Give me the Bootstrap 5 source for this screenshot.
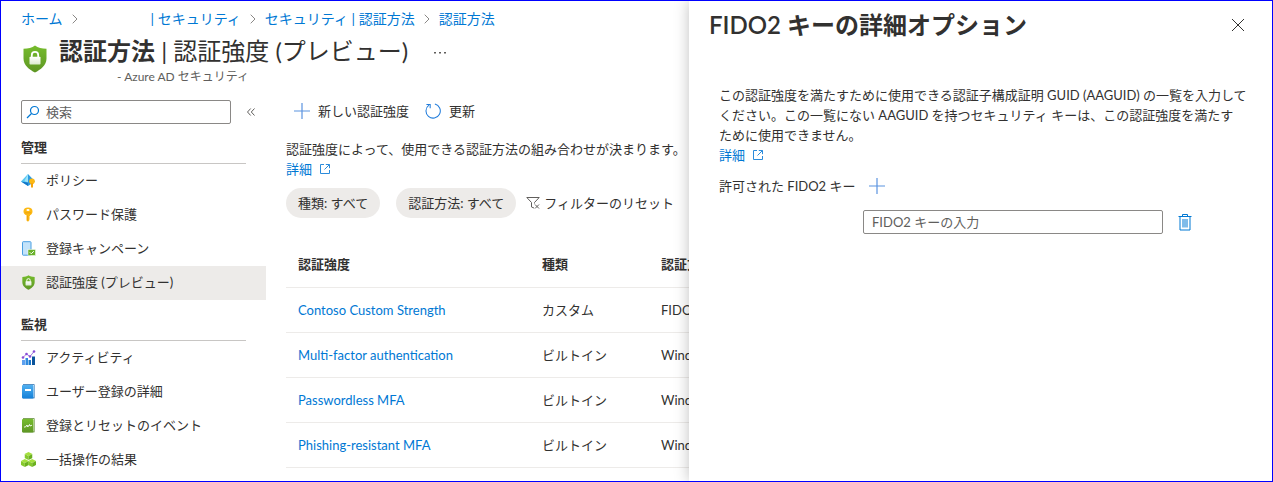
<!DOCTYPE html>
<html lang="ja">
<head>
<meta charset="utf-8">
<meta name="viewport" content="width=device-width, initial-scale=1">
<title>認証方法 | 認証強度 (プレビュー)</title>
<link href="https://cdn.jsdelivr.net/npm/bootstrap@5.3.0/dist/css/bootstrap.min.css" rel="stylesheet">
<style>
:root { --az-blue: #0078d4; --az-text: #323130; --az-muted: #605e5c; --az-line: #edebe9; }
body { font-family: Lato, "Noto Sans CJK JP", sans-serif; font-size: 13px; line-height: 20px; color: var(--az-text); background: #fff; }
a { color: var(--az-blue); text-decoration: none; }
svg { display: block; flex: none; }
.shell { min-height: 100vh; border: 1px solid #00f; }
.blade { flex: 688 1 0; min-width: 0; }
.panel { flex: 583 1 0; min-width: 0; background: #fff; box-shadow: 0 0 14px rgba(0,0,0,.25); clip-path: inset(0 0 0 -20px); }
.panel-in { padding: 8px 19px 8px 20px; }
.crumbs { --bs-breadcrumb-item-padding-x: 0; font-size: 14px; padding: 8px 0 0 20px; gap: 9px; height: 28px; }
.tenant { padding-left: 64px; }
.head { padding: 0 20px; height: 57px; }
.head h1 { font-size: 24px; line-height: 36px; font-weight: 400; margin: 4px 0 0; }
.head h1 b { font-weight: 600; }
.head p { font-size: 12px; line-height: 16px; color: var(--az-muted); padding-left: 58px; margin: 0; }
.head-text { margin-left: 10px; }
.side { width: 265px; flex: none; padding-top: 14px; }
.finder { width: 210px; }
.box { height: 24px; border: 1px solid #8a8886; border-radius: 2px; font-size: 13px; line-height: 20px; padding: 1px 8px; color: var(--az-text); }
.box::placeholder { color: var(--az-muted); opacity: 1; }
.finder .box { padding-left: 24px; }
.finder svg { position: absolute; left: 5px; top: 5px; }
.side h2 { font-size: 13px; line-height: 20px; font-weight: 600; margin: 0 20px; padding: 14px 0 6px; border-bottom: 1px solid #c8c6c4; }
.side h2.first { padding-top: 13px; }
.menu a { height: 34px; padding: 0 0 2px 20px; gap: 10px; color: var(--az-text); }
.menu a.active { background: var(--az-line); }
.content { min-width: 0; overflow: hidden; padding: 15px 0 0 20px; }
.tool { border: 0; background: none; padding: 0; color: var(--az-text); }
.pill { border: 0; border-radius: 15px; height: 30px; padding: 0 12px; background: var(--az-line); color: var(--az-text); }
.bar { margin-bottom: 18px; }
.filters { margin-top: 9px; }
.reset { margin-left: 10px; }
.grid { width: 600px; table-layout: fixed; margin: 24px 0 0; --bs-table-color: var(--az-text); }
.grid th, .grid td { height: 45px; padding: 0 12px; vertical-align: middle; border-bottom: 1px solid var(--az-line); white-space: nowrap; }
.grid th { font-weight: 600; }
.grid .c1 { width: 244px; } .grid .c2 { width: 119px; }
.panel h2 { font-size: 24px; line-height: 32px; font-weight: 600; margin: 0; }
.pbody { padding: 44px 0 0 10px; }
.allowed { gap: 14px; margin-top: 11px; }
.keyrow { padding-left: 144px; gap: 14px; margin-top: 14px; }
.keyrow .box { width: 300px; }
</style>
</head>
<body>
<svg width="0" height="0" class="position-absolute" aria-hidden="true">
  <defs>
    <linearGradient id="gg" x1="0" y1="0" x2="0" y2="1"><stop offset="0" stop-color="#76bc2d"/><stop offset="1" stop-color="#5e9624"/></linearGradient>
    <linearGradient id="gb" x1="0" y1="0" x2="0" y2="1"><stop offset="0" stop-color="#50b0f0"/><stop offset="1" stop-color="#1480d8"/></linearGradient>
    <linearGradient id="gw" x1="0" y1="0" x2="0" y2="1"><stop offset="0" stop-color="#fff"/><stop offset="1" stop-color="#dcebd0"/></linearGradient>
    <symbol id="shield" viewBox="0 0 24 28">
      <path fill="url(#gg)" d="M12 .5c3 2.400 6.800 3 11.500 3.200v9.800c0 7-6 11.200-11.500 14C6.500 24.700.5 20.500.5 13.500V3.700C5.200 3.500 9 2.900 12 .5z"/>
      <path fill="none" stroke="#fff" stroke-width="1.800" d="M8.800 12.500V10a3.200 3.200 0 0 1 6.400 0v2.500"/>
      <rect x="6.500" y="11.800" width="11" height="7.700" rx=".8" fill="url(#gw)"/>
    </symbol>
    <symbol id="chev" viewBox="0 0 6 10"><path d="M.7.7 5 5 .7 9.300" fill="none" stroke="#8a8886"/></symbol>
    <symbol id="plus" viewBox="0 0 16 16"><path d="M8 0v16M0 8h16" stroke="#5b93e0" stroke-width="1.200"/></symbol>
    <symbol id="ext" viewBox="0 0 10 10"><path d="M4 .5H.5v9h9V6M5.800.5h3.700v3.700M9.500.5 4.500 5.500" fill="none" stroke="#2b8bdb"/></symbol>
    <symbol id="cube" viewBox="0 0 8 8"><path fill="#a4e03c" d="M4 0 8 2 4 4 0 2z"/><path fill="#86c92c" d="M0 2l4 2v4L0 6z"/><path fill="#6bb01e" d="M8 2 4 4v4l4-2z"/></symbol>
  </defs>
</svg>

<div class="shell d-flex">
  <div class="blade d-flex flex-column">
    <nav aria-label="階層リンク">
      <ol class="breadcrumb crumbs d-flex flex-nowrap align-items-center mb-0 text-nowrap">
        <li><a href="#">ホーム</a></li>
        <li><svg width="6" height="10"><use href="#chev"/></svg></li>
        <li class="tenant"><a href="#">| セキュリティ</a></li>
        <li><svg width="6" height="10"><use href="#chev"/></svg></li>
        <li><a href="#">セキュリティ | 認証方法</a></li>
        <li><svg width="6" height="10"><use href="#chev"/></svg></li>
        <li><a href="#">認証方法</a></li>
      </ol>
    </nav>
    <header class="head d-flex">
      <svg class="mt-3" width="28" height="28"><use href="#shield"/></svg>
      <div class="head-text text-nowrap">
        <h1><b>認証方法</b> | 認証強度 (プレビュー)</h1>
        <p>- Azure AD セキュリティ</p>
      </div>
      <button class="tool ms-4 align-self-start mt-3" type="button" aria-label="その他"><svg width="14" height="14" viewBox="0 0 14 14" fill="#605e5c"><path d="M2 7h2v1.500H2zM7 7h2v1.500H7zM12 7h2v1.500h-2z"/></svg></button>
    </header>

    <div class="d-flex flex-grow-1">
      <aside class="side">
        <div class="d-flex align-items-center ps-3 ms-1 gap-3">
          <div class="finder position-relative">
            <svg width="14" height="14" viewBox="0 0 14 14" fill="none" stroke="#0078d4" stroke-width="1.200"><circle cx="8.500" cy="5.500" r="4"/><path d="M5.500 8.500 1 13"/></svg>
            <input class="form-control box" type="search" placeholder="検索" aria-label="検索">
          </div>
          <button class="tool" type="button" aria-label="メニューを折りたたむ"><svg width="8" height="8" viewBox="0 0 8 8" fill="none" stroke="#605e5c"><path d="M3.700.5.5 4l3.200 3.500M7.500.5 4.300 4l3.200 3.500"/></svg></button>
        </div>
        <h2 class="first">管理</h2>
        <nav class="menu" aria-label="管理">
          <a class="d-flex align-items-center" href="#">
            <svg width="15" height="15" viewBox="0 0 15 15"><path fill="#5ac8f2" d="M7 1v12L0 8.500z"/><path fill="#2f9be0" d="M7 1l7 7.500L7 13z"/><path fill="#9be3fa" d="M7 1 3.500 8 7 9.500z"/><path fill="#1577c8" d="M0 8.500 7 9.500V13z"/><circle cx="11" cy="8.300" r="2.800" fill="#fdb913"/><path fill="#f5a30c" d="M10 10h2v4l-1 1-1-1z"/></svg>ポリシー</a>
          <a class="d-flex align-items-center" href="#">
            <svg width="15" height="15" viewBox="0 0 15 15"><path fill="#fdb913" d="M7 .5C10 .5 11.500 2 11.500 4.500 11.500 6.500 10.500 7.500 9 8.300V9l-1 1 1 1-1 1 .7.800L7 14.700 5.500 13.500V8.300C3.500 7.500 2.500 6.500 2.500 4.500 2.500 2 4 .5 7 .5z"/><ellipse cx="7" cy="3" rx="1.600" ry="1" fill="#fff"/><path fill="#e89a0c" d="M4 5.500h6v.8H4zM6.300 8.500h.8v5h-.8z"/></svg>パスワード保護</a>
          <a class="d-flex align-items-center" href="#">
            <svg width="15" height="15" viewBox="0 0 15 15"><rect x="1.500" y=".7" width="8.500" height="13.500" rx=".7" fill="#c3e3fa" stroke="#4a9fe2"/><rect x="7" y="8.500" width="7.500" height="6" fill="#69b12a" stroke="#fff" stroke-width=".5"/><path d="m8.800 11.300 1.500 1.500 2.500-2.600" fill="none" stroke="#fff"/></svg>登録キャンペーン</a>
          <a class="d-flex align-items-center active" href="#" aria-current="page">
            <svg width="15" height="15"><use href="#shield"/></svg>認証強度 (プレビュー)</a>
        </nav>
        <h2>監視</h2>
        <nav class="menu" aria-label="監視">
          <a class="d-flex align-items-center" href="#">
            <svg width="15" height="15" viewBox="0 0 15 15"><path fill="#5ea0ef" d="M1 10h3v5H1z"/><path fill="#2f8be0" d="M4.500 8h2.500v7H4.500z"/><path fill="#1a78cc" d="M7.500 10H10v5H7.500z"/><path fill="#0a539b" d="M11 6.500h3V15h-3z"/><path d="M2 7.500 5.500 4 9 6.500 13 1.500" fill="none" stroke="#a479e0"/><g fill="#8a4fd6"><circle cx="2" cy="7.500" r="1.300"/><circle cx="5.500" cy="4" r="1.300"/><circle cx="9" cy="6.500" r="1.300"/><circle cx="13" cy="1.500" r="1.300"/></g></svg>アクティビティ</a>
          <a class="d-flex align-items-center" href="#">
            <svg width="15" height="15" viewBox="0 0 15 15"><path fill="#0f5fa8" d="M2 .3h11.500v14H2z"/><path fill="#e8f2fb" d="M3 1h10v12.500H3z"/><rect x="1" y="1" width="11.500" height="13.500" rx="1" fill="url(#gb)"/><path fill="#fff" d="M4 5h6v2H4z"/></svg>ユーザー登録の詳細</a>
          <a class="d-flex align-items-center" href="#">
            <svg width="15" height="15" viewBox="0 0 15 15"><path fill="#4a7d18" d="M2 .3h11.500v14H2z"/><path fill="#eef6e6" d="M3 1h10v12.500H3z"/><rect x="1" y="1" width="11.500" height="13.500" rx="1" fill="url(#gg)"/><path d="M3 9h1.500l1.500-2 .8 2L8.500 6.500 9 8l2-.8" fill="none" stroke="#fff" stroke-width=".9"/></svg>登録とリセットのイベント</a>
          <a class="d-flex align-items-center" href="#">
            <svg width="15" height="15" viewBox="0 0 15 15"><use href="#cube" x="3.500" y="0" width="8" height="8"/><use href="#cube" x="-.2" y="7" width="8" height="8"/><use href="#cube" x="7.200" y="7" width="8" height="8"/></svg>一括操作の結果</a>
        </nav>
      </aside>

      <main class="content flex-grow-1 text-nowrap">
        <div class="bar d-flex gap-3 ps-2 align-items-center">
          <button class="tool d-flex align-items-center gap-2" type="button"><svg width="16" height="16"><use href="#plus"/></svg>新しい認証強度</button>
          <button class="tool d-flex align-items-center gap-2" type="button"><svg width="16" height="16" viewBox="0 0 17 17" fill="none" stroke="#1f7bdb" stroke-width="1.100"><path d="M10.500 1.100A7.600 7.600 0 1 1 4.200 2.300M1.500 1.500h4v4"/></svg>更新</button>
        </div>
        <p class="mb-0">認証強度によって、使用できる認証方法の組み合わせが決まります。</p>
        <a class="d-inline-flex align-items-center gap-2" href="#">詳細<svg width="10" height="10"><use href="#ext"/></svg></a>
        <div class="filters d-flex align-items-center">
          <button class="pill" type="button">種類: すべて</button>
          <button class="pill ms-3" type="button">認証方法: すべて</button>
          <button class="tool reset d-flex align-items-center gap-1" type="button"><svg width="14" height="14" viewBox="0 0 14 14" fill="none" stroke="#605e5c"><path d="M8 12 5.500 11V6.500L.8 1.500h12.400L8.500 6.500v1M9 8.500l4 4M13 8.500l-4 4"/></svg>フィルターのリセット</button>
        </div>
        <table class="table grid">
          <thead><tr><th class="c1" scope="col">認証強度</th><th class="c2" scope="col">種類</th><th scope="col">認証方法</th></tr></thead>
          <tbody>
            <tr><td><a href="#">Contoso Custom Strength</a></td><td>カスタム</td><td>FIDO2</td></tr>
            <tr><td><a href="#">Multi-factor authentication</a></td><td>ビルトイン</td><td>Windows</td></tr>
            <tr><td><a href="#">Passwordless MFA</a></td><td>ビルトイン</td><td>Windows</td></tr>
            <tr><td><a href="#">Phishing-resistant MFA</a></td><td>ビルトイン</td><td>Windows</td></tr>
          </tbody>
        </table>
      </main>
    </div>
  </div>

  <section class="panel position-relative" aria-labelledby="ptitle">
    <div class="panel-in">
      <div class="d-flex justify-content-between align-items-center pe-2">
        <h2 id="ptitle">FIDO2 キーの詳細オプション</h2>
        <button class="tool" type="button" aria-label="閉じる"><svg width="14" height="14" viewBox="0 0 14 14" stroke="#323130"><path d="M1 1l12 12M13 1 1 13"/></svg></button>
      </div>
      <div class="pbody">
        <p class="mb-0">この認証強度を満たすために使用できる認証子構成証明 GUID (AAGUID) の一覧を入力して<br>ください。この一覧にない AAGUID を持つセキュリティ キーは、この認証強度を満たす<br>ために使用できません。</p>
        <a class="d-inline-flex align-items-center gap-2" href="#">詳細<svg width="10" height="10"><use href="#ext"/></svg></a>
        <div class="allowed d-flex align-items-center">
          <label for="key">許可された FIDO2 キー</label>
          <button class="tool" type="button" aria-label="キーの追加"><svg width="16" height="16"><use href="#plus"/></svg></button>
        </div>
        <div class="keyrow d-flex align-items-center">
          <input id="key" class="form-control box" type="text" placeholder="FIDO2 キーの入力">
          <button class="tool" type="button" aria-label="削除"><svg width="16" height="17" viewBox="0 0 16 17" fill="none" stroke="#0078d4"><path d="M1.500 2.500h13M5.500 2.500v-2h5v2M3 2.500v13.500h10V2.500M6 5v8.500M8 5v8.500M10 5v8.500"/></svg></button>
        </div>
      </div>
    </div>
  </section>
</div>
<script src="https://cdn.jsdelivr.net/npm/bootstrap@5.3.0/dist/js/bootstrap.bundle.min.js"></script>
</body>
</html>
